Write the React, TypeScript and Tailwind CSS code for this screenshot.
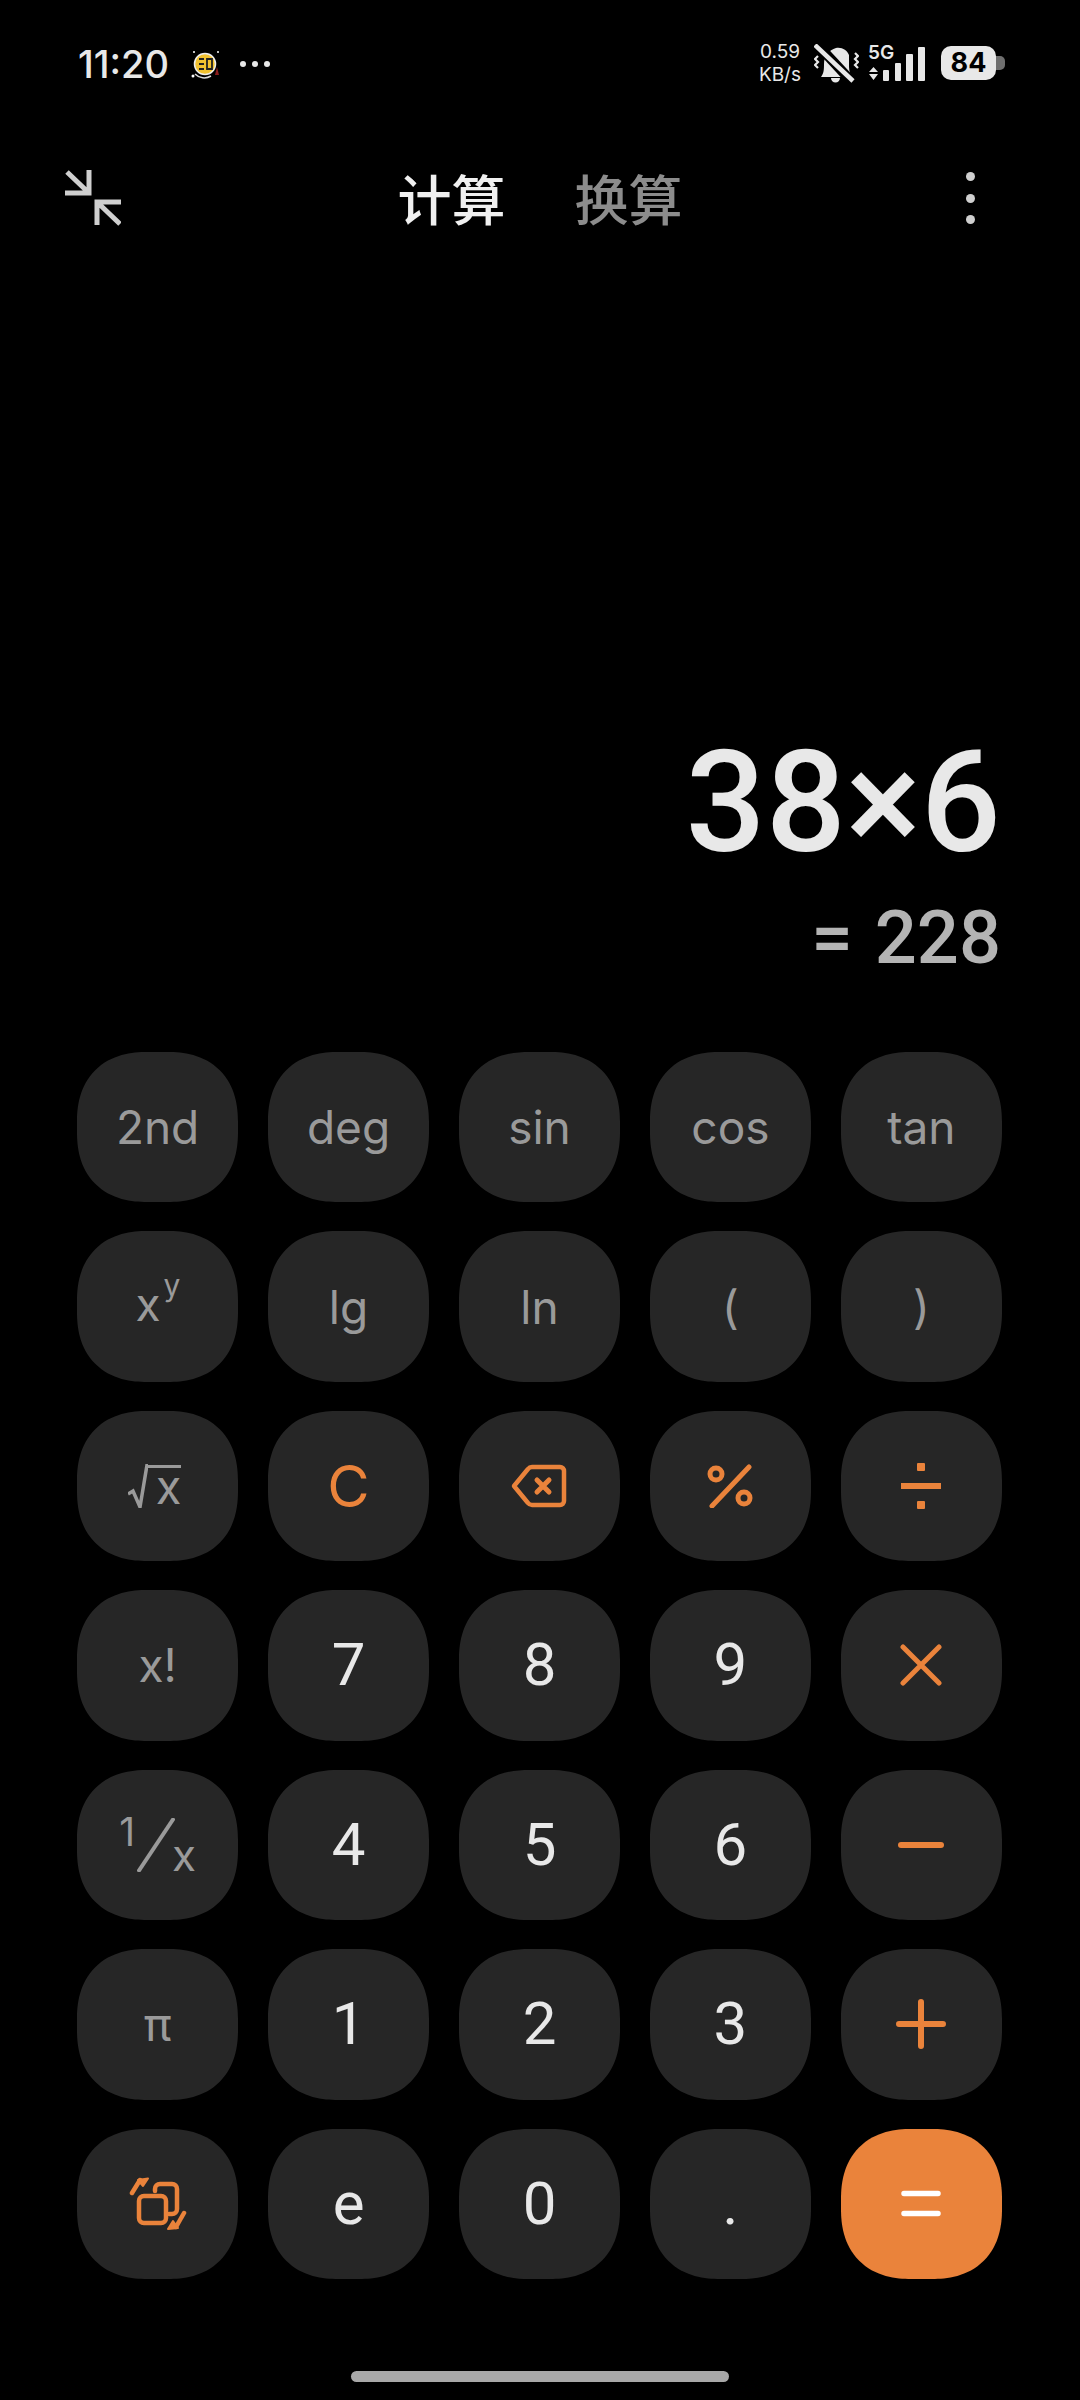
import type { ReactNode } from 'react';

const font = { fontFamily: 'Inter, "Noto Sans CJK SC", sans-serif' };

// Status bar bits
function NoteIcon() {
  return (
    <svg width="32" height="30" viewBox="0 0 32 30" className="ml-[21px]">
      <circle cx="15" cy="15" r="10.5" fill="#f2c230" stroke="#eee" strokeWidth="1.5" />
      <path d="M9 10h5M9 15h5M9 20h5M17 10h5v10h-5z" stroke="#222" strokeWidth="1.8" fill="none" />
      <path d="M5 25a13 13 0 0 0 16 2" stroke="#ddd" strokeWidth="1.5" fill="none" />
      <path d="M27 18l2 8h-4z" fill="#8a1c1c" />
      <circle cx="3" cy="27" r="1.5" fill="#fff" />
      <circle cx="28" cy="3" r="1" fill="#fff" />
      <circle cx="4" cy="3" r="1" fill="#fff" />
    </svg>
  );
}

function MuteBell() {
  return (
    <svg width="45" height="39" viewBox="0 0 45 39">
      <path d="M7 33c3-4 3-8 3-13 0-8 5-14 12-16 6-1 11 2 13 7v12c0 5 2 8 3 10z" fill="#e8e8e8" />
      <path d="M17 34h9a4.500 4.500 0 0 1-9 0z" fill="#e8e8e8" />
      <path d="M0 -3L38 38" stroke="#000" strokeWidth="10" transform="translate(1 1)" />
      <path d="M1 1L39 37" stroke="#e8e8e8" strokeWidth="4.500" />
      <path d="M4 12l-3 3 3 3-3 3 3 3" stroke="#e8e8e8" strokeWidth="2.200" fill="none" />
      <path d="M41 9l3 3-3 3 3 3-3 3 3 3" stroke="#e8e8e8" strokeWidth="2.200" fill="none" />
    </svg>
  );
}

function Signal() {
  return (
    <svg width="58" height="37" viewBox="0 0 58 37">
      <path d="M1 27l4.500-5 4.500 5zM1 29l4.500 6 4.500-6z" fill="#e8e8e8" />
      <rect x="15" y="25" width="6" height="11" rx="1" fill="#e8e8e8" />
      <rect x="27" y="18" width="6" height="18" rx="1" fill="#e8e8e8" />
      <rect x="38" y="9" width="7" height="27" rx="1" fill="#e8e8e8" />
      <rect x="50" y="2" width="7" height="34" rx="1" fill="#e8e8e8" />
    </svg>
  );
}

function Battery() {
  return (
    <div className="ml-[15px] flex items-center">
      <div className="flex h-[34px] w-[55px] items-center justify-center rounded-[10px] bg-[#e8e8e8] text-[27px] font-bold text-black">
        84
      </div>
      <div className="h-[14px] w-[9px] rounded-r-[5px] bg-[#6f6f6f]" />
    </div>
  );
}

function StatusBar() {
  return (
    <div className="flex h-[100px] items-start justify-between pl-[78px] pr-[75px] pt-[40px] text-[#e8e8e8]">
      <div className="flex items-center">
        <span className="text-[38px] font-medium leading-[48px]">11:20</span>
        <NoteIcon />
        <div className="ml-[18px] flex gap-[6px]">
          <span className="h-[6px] w-[6px] rounded-full bg-[#e8e8e8]" />
          <span className="h-[6px] w-[6px] rounded-full bg-[#e8e8e8]" />
          <span className="h-[6px] w-[6px] rounded-full bg-[#e8e8e8]" />
        </div>
      </div>
      <div className="flex items-center">
        <div className="mr-[13px] flex flex-col items-center text-[19px] leading-[23px]">
          <span>0.59</span>
          <span>KB/s</span>
        </div>
        <MuteBell />
        <div className="relative ml-[9px]">
          <span className="absolute left-0 top-[-2px] text-[19px] font-semibold leading-[20px]">5G</span>
          <Signal />
        </div>
        <Battery />
      </div>
    </div>
  );
}

function Header() {
  return (
    <div className="relative mt-[75px] flex h-[54px] items-center justify-center gap-[69px] text-[54px] font-medium leading-[54px]">
      <svg width="56" height="56" viewBox="0 0 56 56" className="absolute left-[65px] top-[-5px]" stroke="#cfcfcf" strokeWidth="5" fill="none">
        <path d="M2 2L24 23M24 0V23H0" />
        <path d="M32 55V32H56M32 32L55 54" />
      </svg>
      <span className="text-[#f0f0f0]">计算</span>
      <span className="text-[#8c8c8c]">换算</span>
      <div className="absolute left-[966px] top-[-3px] flex flex-col gap-[12.500px]">
        <span className="h-[9px] w-[9px] rounded-full bg-[#cfcfcf]" />
        <span className="h-[9px] w-[9px] rounded-full bg-[#cfcfcf]" />
        <span className="h-[9px] w-[9px] rounded-full bg-[#cfcfcf]" />
      </div>
    </div>
  );
}

// Keypad drawings, orange by default
function Icon({ w, h, children }: { w: number; h: number; children: ReactNode }) {
  return (
    <svg width={w} height={h} viewBox={`0 0 ${w} ${h}`} fill="none" stroke="#ea833b" strokeWidth="5" strokeLinecap="round" strokeLinejoin="round">
      {children}
    </svg>
  );
}

const backspace = (
  <Icon w={56} h={44}>
    <path d="M3 22L17 5a5 5 0 0 1 4-2h28a4 4 0 0 1 4 4v30a4 4 0 0 1-4 4H21a5 5 0 0 1-4-2z" strokeWidth="4.500" />
    <path d="M26 16l12 12M38 16L26 28" />
  </Icon>
);

const percent = (
  <Icon w={46} h={44}>
    <circle cx="9" cy="10" r="6" />
    <circle cx="37" cy="34" r="6" />
    <path d="M42 3L5 42" />
  </Icon>
);

const divide = (
  <Icon w={46} h={48}>
    <path d="M3 24H43" strokeWidth="6" strokeLinecap="butt" />
    <rect x="19" y="1" width="8" height="8" rx="1" fill="#ea833b" stroke="none" />
    <rect x="19" y="39" width="8" height="8" rx="1" fill="#ea833b" stroke="none" />
  </Icon>
);

const times = (
  <Icon w={42} h={42}>
    <path d="M3 3L39 39M39 3L3 39" />
  </Icon>
);

const minus = (
  <Icon w={46} h={8}>
    <path d="M3 4H43" strokeWidth="6" />
  </Icon>
);

const plus = (
  <Icon w={50} h={50}>
    <path d="M3 25H47M25 3V47" strokeWidth="6" />
  </Icon>
);

const equals = (
  <Icon w={40} h={27}>
    <path d="M3 3.500H37M3 23.500H37" stroke="#fff" strokeWidth="5.500" />
  </Icon>
);

const rotate = (
  <Icon w={58} h={54}>
    <path d="M26 14v-2a5 5 0 0 1 5-5h12a5 5 0 0 1 5 5v20a5 5 0 0 1-5 5h-3" strokeWidth="4.500" />
    <rect x="10" y="19" width="27" height="27" rx="5" strokeWidth="4.500" />
    <path d="M3 16L11 3" strokeWidth="4.500" />
    <path d="M9 3L19 1.500 14 9z" fill="#ea833b" strokeWidth="2" />
    <path d="M55 36L47 50" strokeWidth="4.500" />
    <path d="M49 51L39 52 44 44z" fill="#ea833b" strokeWidth="2" />
  </Icon>
);

const power = (
  <span className="relative block h-[45px] w-[44px] text-[46px] leading-none">
    <span className="absolute bottom-[2px] left-0">x</span>
    <span className="absolute left-[28px] top-[-14px] text-[30px]">y</span>
  </span>
);

const root = (
  <span className="flex -translate-x-[3px] items-end">
    <svg width="20" height="44" viewBox="0 0 20 44" fill="none" stroke="#9a9a9a" strokeWidth="3.500" className="-mr-px">
      <path d="M0 30L5 27 12 43 19 1H20" />
    </svg>
    <span className="h-[43px] border-t-[3.500px] border-[#9a9a9a] pl-[9px] text-[47px] leading-[38px]">x</span>
  </span>
);

const reciprocal = (
  <span className="flex items-center text-[#9a9a9a]">
    <span className="-translate-y-[13px] text-[39px] leading-none">1</span>
    <svg width="38" height="54" viewBox="0 0 38 54" fill="none" stroke="#9a9a9a" strokeWidth="4" className="ml-[2px]">
      <path d="M1 54L37 0" />
    </svg>
    <span className="-ml-[3px] translate-y-[10px] text-[44px] leading-none">x</span>
  </span>
);

type Tone = 'muted' | 'number' | 'accent' | 'equals';

const keys: { label: ReactNode; tone: Tone }[] = [
  { label: '2nd', tone: 'muted' },
  { label: 'deg', tone: 'muted' },
  { label: 'sin', tone: 'muted' },
  { label: 'cos', tone: 'muted' },
  { label: 'tan', tone: 'muted' },
  { label: power, tone: 'muted' },
  { label: 'lg', tone: 'muted' },
  { label: 'ln', tone: 'muted' },
  { label: '(', tone: 'muted' },
  { label: ')', tone: 'muted' },
  { label: root, tone: 'muted' },
  { label: 'C', tone: 'accent' },
  { label: backspace, tone: 'accent' },
  { label: percent, tone: 'accent' },
  { label: divide, tone: 'accent' },
  { label: 'x!', tone: 'muted' },
  { label: '7', tone: 'number' },
  { label: '8', tone: 'number' },
  { label: '9', tone: 'number' },
  { label: times, tone: 'accent' },
  { label: reciprocal, tone: 'muted' },
  { label: '4', tone: 'number' },
  { label: '5', tone: 'number' },
  { label: '6', tone: 'number' },
  { label: minus, tone: 'accent' },
  { label: 'π', tone: 'muted' },
  { label: '1', tone: 'number' },
  { label: '2', tone: 'number' },
  { label: '3', tone: 'number' },
  { label: plus, tone: 'accent' },
  { label: rotate, tone: 'accent' },
  { label: 'e', tone: 'number' },
  { label: '0', tone: 'number' },
  { label: '.', tone: 'number' },
  { label: equals, tone: 'equals' },
];

const toneClasses: Record<Tone, string> = {
  muted: 'bg-[#262626] text-[#9a9a9a] text-[46px]',
  number: "bg-[#262626] text-[#e8e8e8] text-[60px] font-['Roboto']",
  accent: 'bg-[#262626] text-[#ea833b] text-[58px]',
  equals: 'bg-[#ea833b] text-white text-[58px]',
};

function Keypad() {
  return (
    <div className="ml-[77px] grid h-[1227px] w-[925px] grid-cols-5 grid-rows-7 gap-x-[29.75px] gap-y-[29px]">
      {keys.map((key, i) => (
        <button
          key={i}
          className={`flex items-center justify-center rounded-[70px] leading-none [corner-shape:superellipse(1.2)] ${toneClasses[key.tone]}`}
        >
          {key.label}
        </button>
      ))}
    </div>
  );
}

export default function App() {
  return (
    <div className="flex h-[2400px] w-[1080px] flex-col overflow-hidden bg-black" style={font}>
      <StatusBar />
      <Header />
      <div className="flex flex-1 flex-col items-end justify-end pb-[74px] pr-[79px] font-['Roboto']">
        <div className="text-[141px] font-medium leading-[134px] text-[#e8e8e8]">38×6</div>
        <div className="mt-[28px] flex items-center gap-[22px] text-[74px] font-medium leading-[80px] text-[#b4b4b4]">
          <span>=</span>
          <span>228</span>
        </div>
      </div>
      <Keypad />
      <div className="mx-auto mb-[18px] mt-[92px] h-[11px] w-[378px] rounded-full bg-[#a8a8a8]" />
    </div>
  );
}
